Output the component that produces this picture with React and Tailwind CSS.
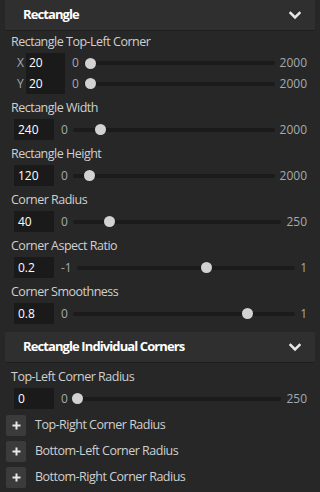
import React from "react";

const font = { fontFamily: '"Open Sans", "Noto Sans", sans-serif' };

function Chevron() {
  return (
    <svg width="12" height="9" viewBox="0 0 12 9" className="mr-[14px]">
      <path d="M1.5 2 L6 6.5 L10.5 2" fill="none" stroke="#e6e6e6" strokeWidth="2.6" strokeLinecap="square" />
    </svg>
  );
}

function Header({ title }) {
  return (
    <div className="h-[31px] bg-[#2f2f2f] border-b border-[#1e1e1e] flex items-center justify-between">
      <span className="pl-[18px] text-[13px] font-bold text-white tracking-[-0.9px]">{title}</span>
      <Chevron />
    </div>
  );
}

function Slider({ min, max, value, lo, hi }) {
  const pct = (value - lo) / (hi - lo);
  return (
    <div className="flex items-center flex-1 min-w-0 h-full">
      <span className="text-[12px] text-[#a4aab0] ml-[7px] leading-none">{min}</span>
      <div className="relative flex-1 h-[4px] ml-[5px] mr-[5px] rounded-full bg-[#1b1b1b]">
        <div
          className="absolute top-1/2 w-[11px] h-[11px] -mt-[5.5px] -ml-[5.5px] rounded-full bg-[#d2d2d2]"
          style={{ left: `calc(5px + ${pct} * (100% - 10px))` }}
        />
      </div>
      <span className="text-[12px] text-[#a4aab0] leading-none">{max}</span>
    </div>
  );
}

function Label({ children }) {
  return <div className="h-[21px] flex items-center pl-[6px] text-[12.5px] text-[#d0d0d0] tracking-[-0.5px]">{children}</div>;
}

function SliderRow({ label, value, min, max, lo, hi }) {
  return (
    <div className="mt-[4px]">
      <Label>{label}</Label>
      <div className="h-[21px] flex items-center pl-[9px] pr-[8px]">
        <div className="w-[40px] h-[21px] bg-[#1a1a1a] text-white text-[12px] flex items-center pl-[4px]">{value}</div>
        <Slider min={min} max={max} value={parseFloat(value)} lo={lo} hi={hi} />
      </div>
    </div>
  );
}

function XYRow({ axis, value }) {
  return (
    <div className="h-[20.5px] flex items-center pl-[9px] pr-[8px]">
      <span className="w-[12px] text-[12px] text-[#a4aab0] pl-[3px]">{axis}</span>
      <div className="w-[39px] h-full bg-[#1a1a1a] text-white text-[12px] flex items-center pl-[3px]">{value}</div>
      <Slider min="0" max="2000" value={parseFloat(value)} lo={0} hi={2000} />
    </div>
  );
}

function PlusRow({ label }) {
  return (
    <div className="h-[26px] flex items-center pl-[1px]">
      <div className="w-[20px] h-[21px] rounded-[2px] bg-[#3b3b3b] flex items-center justify-center">
        <svg width="9" height="9" viewBox="0 0 9 9">
          <path d="M4.5 0.5 V8.5 M0.5 4.5 H8.5" stroke="#e8e8e8" strokeWidth="2" />
        </svg>
      </div>
      <span className="ml-[9px] text-[12.5px] text-[#d0d0d0] tracking-[-0.5px]">{label}</span>
    </div>
  );
}

export default function App() {
  return (
    <div className="w-[320px] h-[492px] bg-[#272727] overflow-hidden" style={font}>
      <div className="mx-[5px]">
        <Header title="Rectangle" />
        <div className="mt-[1px]">
          <Label>Rectangle Top-Left Corner</Label>
          <XYRow axis="X" value="20" />
          <XYRow axis="Y" value="20" />
        </div>
        <SliderRow label="Rectangle Width" value="240" min="0" max="2000" lo={0} hi={2000} />
        <SliderRow label="Rectangle Height" value="120" min="0" max="2000" lo={0} hi={2000} />
        <SliderRow label="Corner Radius" value="40" min="0" max="250" lo={0} hi={250} />
        <SliderRow label="Corner Aspect Ratio" value="0.2" min="-1" max="1" lo={-1} hi={1} />
        <SliderRow label="Corner Smoothness" value="0.8" min="0" max="1" lo={0} hi={1} />
        <div className="mt-[8px]">
          <Header title="Rectangle Individual Corners" />
        </div>
        <SliderRow label="Top-Left Corner Radius" value="0" min="0" max="250" lo={0} hi={250} />
        <div className="mt-[3px]">
          <PlusRow label="Top-Right Corner Radius" />
          <PlusRow label="Bottom-Left Corner Radius" />
          <PlusRow label="Bottom-Right Corner Radius" />
        </div>
      </div>
    </div>
  );
}
